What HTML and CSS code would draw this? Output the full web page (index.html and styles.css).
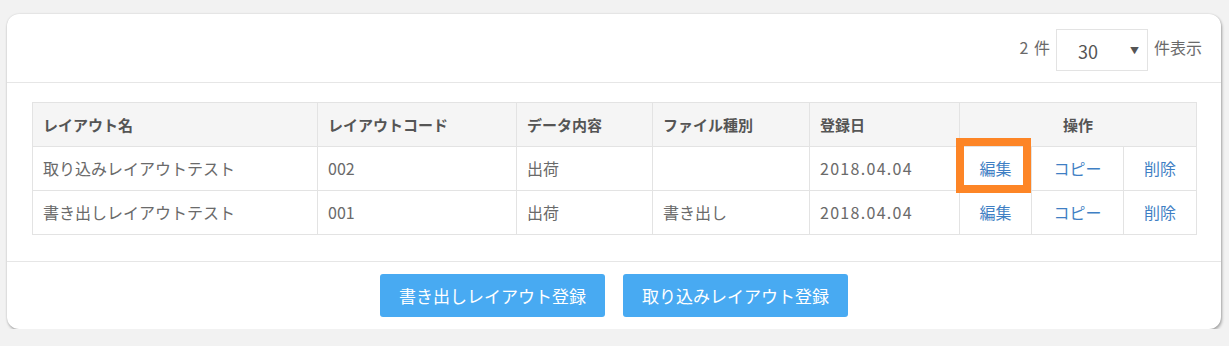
FILE: index.html
```html
<!DOCTYPE html>
<html lang="ja">
<head>
	<meta charset="UTF-8">
	<title>レイアウト一覧</title>
	<link rel="stylesheet" href="styles.css">
</head>
<body>
	<section class="card">
		<div class="card-head">
			<span class="count">2 件</span>
			<div class="per-page">
				<span class="per-page-value">30</span>
				<span class="per-page-arrow">▼</span>
			</div>
			<span class="count-label">件表示</span>
		</div>
		<div class="card-body">
			<table class="layout-table">
				<colgroup>
					<col class="c-name">
					<col class="c-code">
					<col class="c-data">
					<col class="c-file">
					<col class="c-date">
					<col class="c-edit">
					<col class="c-copy">
					<col class="c-del">
				</colgroup>
				<thead>
					<tr>
						<th>レイアウト名</th>
						<th>レイアウトコード</th>
						<th>データ内容</th>
						<th>ファイル種別</th>
						<th>登録日</th>
						<th colspan="3" class="op-head">操作</th>
					</tr>
				</thead>
				<tbody>
					<tr>
						<td>取り込みレイアウトテスト</td>
						<td>002</td>
						<td>出荷</td>
						<td></td>
						<td class="date">2018.04.04</td>
						<td class="op marked"><a href="#">編集</a><span class="mark"></span></td>
						<td class="op"><a href="#">コピー</a></td>
						<td class="op"><a href="#">削除</a></td>
					</tr>
					<tr>
						<td>書き出しレイアウトテスト</td>
						<td>001</td>
						<td>出荷</td>
						<td>書き出し</td>
						<td class="date">2018.04.04</td>
						<td class="op"><a href="#">編集</a></td>
						<td class="op"><a href="#">コピー</a></td>
						<td class="op"><a href="#">削除</a></td>
					</tr>
				</tbody>
			</table>
		</div>
		<div class="card-foot">
			<button class="btn">書き出しレイアウト登録</button>
			<button class="btn">取り込みレイアウト登録</button>
		</div>
	</section>
</body>
</html>
```

FILE: styles.css
```css
body{
	margin:0;
	padding:14px 8px 0 7px;
	background:#f2f2f2;
	font-family:"Noto Sans CJK JP","Noto Sans",sans-serif;
	color:#6a6a6a;
}
.card{
	height:315px;
	background:#fff;
	border-radius:12px;
	box-shadow:0 0 2px rgba(0,0,0,.15),1px 2px 3px rgba(0,0,0,.3);
	display:flex;
	flex-direction:column;
}
.card-head{
	height:68px;
	border-bottom:1px solid #e6e6e6;
	display:flex;
	align-items:center;
	justify-content:flex-end;
	padding:0 19px 0 0;
	box-sizing:content-box;
	font-size:16px;
	color:#6a6a6a;
}
.count{
	margin-right:6px;
	padding-bottom:2px;
	word-spacing:2px;
}
.per-page{
	width:92px;
	height:42px;
	border:1px solid #e3e3e3;
	display:flex;
	align-items:center;
	justify-content:space-between;
	padding:0 8px 0 21px;
	box-sizing:border-box;
	margin:4px 6px 0 0;
	color:#555;
}
.per-page-value{
	font-size:18px;
	padding-top:2px;
}
.per-page-arrow{
	font-size:9px;
	color:#555;
}
.count-label{
	padding-bottom:2px;
}
.card-body{
	padding:19px 25px 26px;
	border-bottom:1px solid #e6e6e6;
}
.layout-table{
	width:100%;
	border-collapse:collapse;
	table-layout:fixed;
	font-size:16px;
}
.c-name{width:285px;}
.c-code{width:199px;}
.c-data{width:136px;}
.c-file{width:157px;}
.c-date{width:150px;}
.c-edit{width:72px;}
.c-copy{width:92px;}
.c-del{width:73px;}
.layout-table th,
.layout-table td{
	height:44px;
	border:1px solid #e3e3e3;
	padding:0 0 1px 10px;
	text-align:left;
	white-space:nowrap;
	box-sizing:border-box;
}
.layout-table th{
	background:#f5f5f5;
	color:#555;
	font-weight:bold;
	font-size:15px;
}
.layout-table th.op-head{
	text-align:center;
	padding-left:0;
}
.date{
	letter-spacing:1.3px;
}
.layout-table td.op{
	text-align:center;
	padding-left:0;
}
.op a{
	color:#3f7fc4;
	text-decoration:none;
}
.marked{
	position:relative;
}
.mark{
	position:absolute;
	left:-4px;
	top:-9px;
	width:75px;
	height:55px;
	border:8px solid #fd8526;
	box-sizing:border-box;
}
.card-foot{
	display:flex;
	justify-content:center;
	gap:18px;
	padding-top:12px;
}
.btn{
	height:43px;
	padding:0 16px;
	border:none;
	border-radius:3px;
	background:#48aaf2;
	color:#fff;
	font-family:inherit;
	font-size:17px;
	width:225px;
}
```
